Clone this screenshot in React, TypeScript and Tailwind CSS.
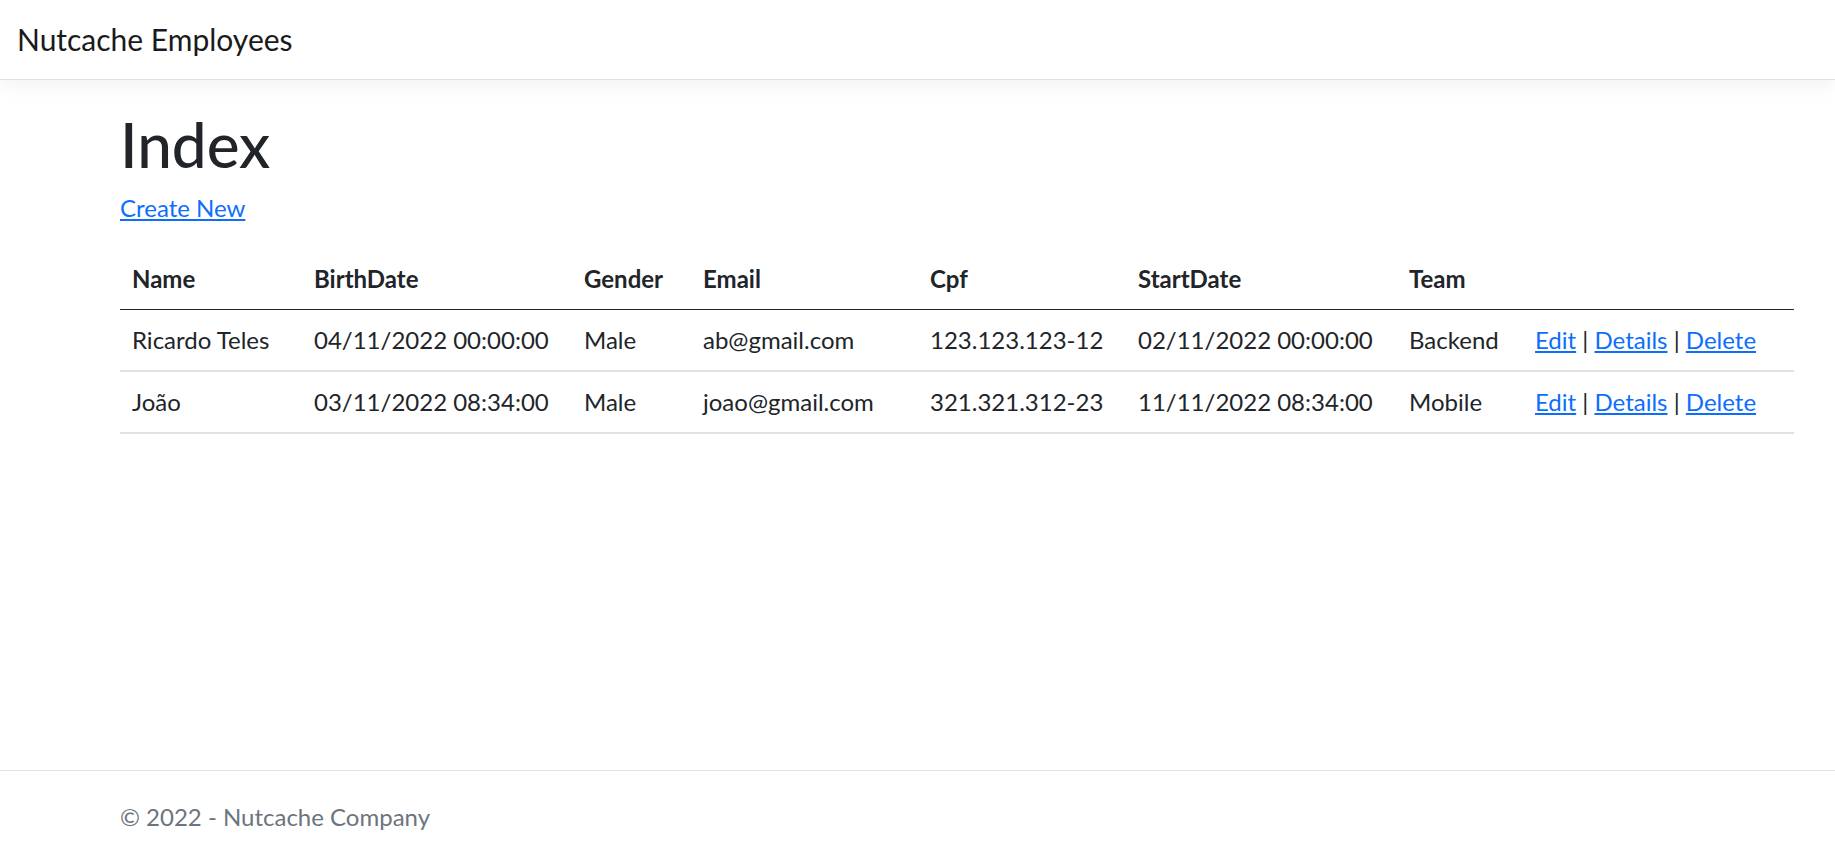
import React from 'react';

type Employee = {
  name: string;
  birthDate: string;
  gender: string;
  email: string;
  cpf: string;
  startDate: string;
  team: string;
};

const employees: Employee[] = [
  {
    name: 'Ricardo Teles',
    birthDate: '04/11/2022 00:00:00',
    gender: 'Male',
    email: 'ab@gmail.com',
    cpf: '123.123.123-12',
    startDate: '02/11/2022 00:00:00',
    team: 'Backend',
  },
  {
    name: 'João',
    birthDate: '03/11/2022 08:34:00',
    gender: 'Male',
    email: 'joao@gmail.com',
    cpf: '321.321.312-23',
    startDate: '11/11/2022 08:34:00',
    team: 'Mobile',
  },
];

const App: React.FC = () => {
  return (
    <div className="min-h-[862px] flex flex-col bg-white text-[#212529] font-['Lato','Liberation_Sans',sans-serif] text-[24px] leading-[36px]">
      {/* Navbar */}
      <header className="relative z-10 h-[80px] flex items-center px-[17px] border-b border-[#dee2e6] bg-white shadow-[0_6px_18px_rgba(0,0,0,0.05)]">
        <a href="#" className="text-[30px] leading-[45px] text-[#1a1a1a]">
          Nutcache Employees
        </a>
      </header>

      {/* Main */}
      <main className="flex-1 pl-[120px] pr-[41px]">
        <h1 className="mt-[28px] mb-[10px] text-[62px] leading-[72px] font-medium">Index</h1>
        <p className="mb-[23px]">
          <a href="#" className="text-[#0d6efd] underline">Create New</a>
        </p>

        <table className="w-full table-fixed border-collapse text-left">
          <thead>
            <tr className="border-b border-[#212529]">
              <th className="w-[182px] px-[12px] py-[12px] font-bold">Name</th>
              <th className="w-[270px] px-[12px] py-[12px] font-bold">BirthDate</th>
              <th className="w-[119px] px-[12px] py-[12px] font-bold">Gender</th>
              <th className="w-[227px] px-[12px] py-[12px] font-bold">Email</th>
              <th className="w-[208px] px-[12px] py-[12px] font-bold">Cpf</th>
              <th className="w-[271px] px-[12px] py-[12px] font-bold">StartDate</th>
              <th className="w-[126px] px-[12px] py-[12px] font-bold">Team</th>
              <th className="px-[12px] py-[12px]"></th>
            </tr>
          </thead>
          <tbody>
            {employees.map((e) => (
              <tr key={e.email} className="border-b-2 border-[#dee2e6]">
                <td className="px-[12px] py-[12px] whitespace-nowrap">{e.name}</td>
                <td className="px-[12px] py-[12px] whitespace-nowrap">{e.birthDate}</td>
                <td className="px-[12px] py-[12px] whitespace-nowrap">{e.gender}</td>
                <td className="px-[12px] py-[12px] whitespace-nowrap">{e.email}</td>
                <td className="px-[12px] py-[12px] whitespace-nowrap">{e.cpf}</td>
                <td className="px-[12px] py-[12px] whitespace-nowrap">{e.startDate}</td>
                <td className="px-[12px] py-[12px] whitespace-nowrap">{e.team}</td>
                <td className="px-[12px] py-[12px] whitespace-nowrap">
                  <a href="#" className="text-[#0d6efd] underline">Edit</a> |{' '}
                  <a href="#" className="text-[#0d6efd] underline">Details</a> |{' '}
                  <a href="#" className="text-[#0d6efd] underline">Delete</a>
                </td>
              </tr>
            ))}
          </tbody>
        </table>
      </main>

      {/* Footer */}
      <footer className="border-t border-[#dee2e6] pt-[1px] pl-[120px] leading-[90px] text-[#6c757d] whitespace-nowrap">
        © 2022 - Nutcache Company
      </footer>
    </div>
  );
};

export default App;
